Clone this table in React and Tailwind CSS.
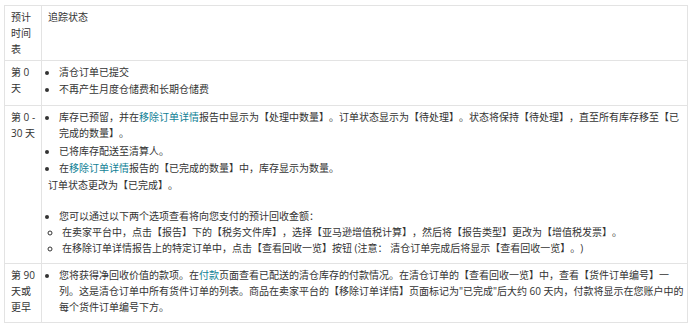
import React from "react"

// 清仓订单 时间表
const linkCls = "text-[#0f7f95]"

function Row({ when, children, last }) {
  return (
    <div className={`flex ${last ? "" : "border-b border-[#e3e3e3]"}`}>
      <div className="w-[37px] shrink-0 border-r border-[#e3e3e3] pl-[6px] pr-[4px] py-[3px]">
        {when}
      </div>
      <div className="flex-1 pl-[6px] pr-[2px] py-[3px]">{children}</div>
    </div>
  )
}

export default function App() {
  return (
    <div
      className="bg-white w-[692px] h-[324px] pt-[5px] pl-[4px] text-[10px] leading-[16px] text-[#333] [text-spacing-trim:space-all]"
      style={{ fontFamily: '"Open Sans", "Noto Sans CJK SC", sans-serif' }}
    >
      <div className="w-[684px] border border-[#e3e3e3]">

        <Row when={<>预计时间表</>}>
          <p>追踪状态</p>
        </Row>

        <Row when={<>第 0 天</>}>
          <ul className="list-disc pl-[11px] mb-[5px]">
            <li className="mb-[1px]">清仓订单已提交</li>
            <li className="mb-[1px]">不再产生月度仓储费和长期仓储费</li>
          </ul>
        </Row>

        <Row when={<>第 0 - 30 天</>}>
          <ul className="list-disc pl-[11px]">
            <li className="mb-[2px]">
              库存已预留，并在<span className={linkCls}>移除订单详情</span>报告中显示为【处理中数量】。订单状态显示为【待处理】。状态将保持【待处理】，直至所有库存移至【已完成的数量】。
            </li>
            <li className="mb-[1px]">已将库存配送至清算人。</li>
            <li className="mb-[1px]">
              在<span className={linkCls}>移除订单详情</span>报告的【已完成的数量】中，库存显示为数量。
            </li>
          </ul>
          <p>订单状态更改为【已完成】。</p>
          <ul className="list-disc pl-[11px] mt-[15px] mb-[4px]">
            <li>
              您可以通过以下两个选项查看将向您支付的预计回收金额：
              <ul className="list-[circle] pl-[3px]">
                <li>在卖家平台中，点击【报告】下的【税务文件库】，选择【亚马逊增值税计算】，然后将【报告类型】更改为【增值税发票】。</li>
                <li>在移除订单详情报告上的特定订单中，点击【查看回收一览】按钮 (注意： 清仓订单完成后将显示【查看回收一览】。)</li>
              </ul>
            </li>
          </ul>
        </Row>

        <Row when={<>第 90 天或更早</>} last>
          <ul className="list-disc pl-[11px] mb-[4px]">
            <li>
              您将获得净回收价值的款项。在<span className={linkCls}>付款</span>页面查看已配送的清仓库存的付款情况。在清仓订单的【查看回收一览】中，查看【货件订单编号】一列。这是清仓订单中所有货件订单的列表。商品在卖家平台的【移除订单详情】页面标记为"已完成"后大约 60 天内，付款将显示在您账户中的每个货件订单编号下方。
            </li>
          </ul>
        </Row>

      </div>
    </div>
  )
}
